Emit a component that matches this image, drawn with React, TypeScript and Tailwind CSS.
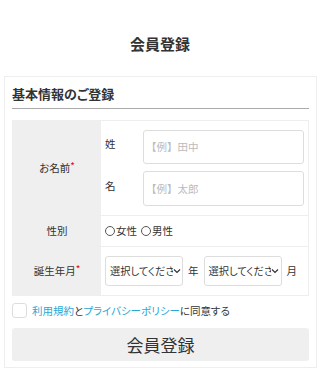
import React from "react";

function Req() {
  return <span className="relative -top-[3px] text-[10px] text-[#e60012]">*</span>;
}

function FakeSelect() {
  return (
    <div className="flex h-[30px] w-[78px] items-center rounded-[3px] border border-[#ddd] bg-white pl-[4px] pr-[2px]">
      <span className="shrink-0 whitespace-nowrap text-[10.25px] text-[#333]">選択してくださ</span>
      <svg width="8" height="6" viewBox="0 0 8 6" className="-ml-[2px] shrink-0 bg-white">
        <path d="M1 1.5 L4 4.5 L7 1.5" fill="none" stroke="#333" strokeWidth="1.2" />
      </svg>
    </div>
  );
}

function Radio({ label }: { label: string }) {
  return (
    <span className="flex items-center">
      <span className="mr-[1px] inline-block h-[10px] w-[10px] rounded-full border border-[#555]" />
      {label}
    </span>
  );
}

export default function App() {
  return (
    <div
      className="min-h-[385px] bg-white text-[#333] [font-feature-settings:'palt']"
      style={{ fontFamily: '"Noto Sans CJK JP", "Noto Sans", sans-serif' }}
    >
      <h1 className="pt-[34px] pb-[22px] text-center text-[15px] font-bold leading-[20px]">会員登録</h1>

      <div className="ml-[4px] mr-[3px] border border-[#eee] px-[7px] pb-[6px]">
        <h2 className="border-b-[1.5px] border-[#aaa] pt-[9px] pb-[6px] text-[13px] font-bold leading-[16px]">
          基本情報のご登録
        </h2>

        <div className="mt-[11px] border border-[#eee] text-[10.5px]">
          <div className="flex border-b border-[#eee]">
            <div className="flex w-[88px] shrink-0 items-center justify-center bg-[#efefef]">
              お名前<Req />
            </div>
            <div className="flex flex-1 flex-col gap-[7px] py-[9px] pl-[4px] pr-[4px]">
              <div className="flex items-center">
                <span className="w-[38px] -mt-[6px]">姓</span>
                <div className="flex h-[34px] flex-1 items-center rounded-[3px] border border-[#ddd] pl-[2px] text-[#bbb] [font-feature-settings:normal]">
                  【例】田中
                </div>
              </div>
              <div className="flex items-center">
                <span className="w-[38px] -mt-[6px]">名</span>
                <div className="flex h-[35px] flex-1 items-center rounded-[3px] border border-[#ddd] pl-[2px] text-[#bbb] [font-feature-settings:normal]">
                  【例】太郎
                </div>
              </div>
            </div>
          </div>

          <div className="flex h-[31px] border-b border-[#eee]">
            <div className="flex w-[88px] shrink-0 items-center justify-center bg-[#efefef]">性別</div>
            <div className="flex flex-1 items-center gap-[4px] pl-[4px]">
              <Radio label="女性" />
              <Radio label="男性" />
            </div>
          </div>

          <div className="flex h-[48px]">
            <div className="flex w-[88px] shrink-0 items-center justify-center bg-[#efefef]">
              誕生年月<Req />
            </div>
            <div className="flex flex-1 items-center pl-[4px]">
              <FakeSelect />
              <span className="mx-[5px]">年</span>
              <FakeSelect />
              <span className="ml-[5px]">月</span>
            </div>
          </div>
        </div>

        <div className="mt-[7px] flex items-center text-[10.5px]">
          <span className="mr-[5px] inline-block h-[15px] w-[15px] rounded-[3px] border border-[#ddd]" />
          <span>
            <span className="text-[#29a8d6]">利用規約</span>と<span className="text-[#29a8d6]">プライバシーポリシー</span>に同意する
          </span>
        </div>

        <button className="mt-[9px] flex h-[33px] w-full items-center justify-center rounded-[3px] bg-[#efefef] text-[17px] text-[#333]">
          会員登録
        </button>
      </div>
    </div>
  );
}
